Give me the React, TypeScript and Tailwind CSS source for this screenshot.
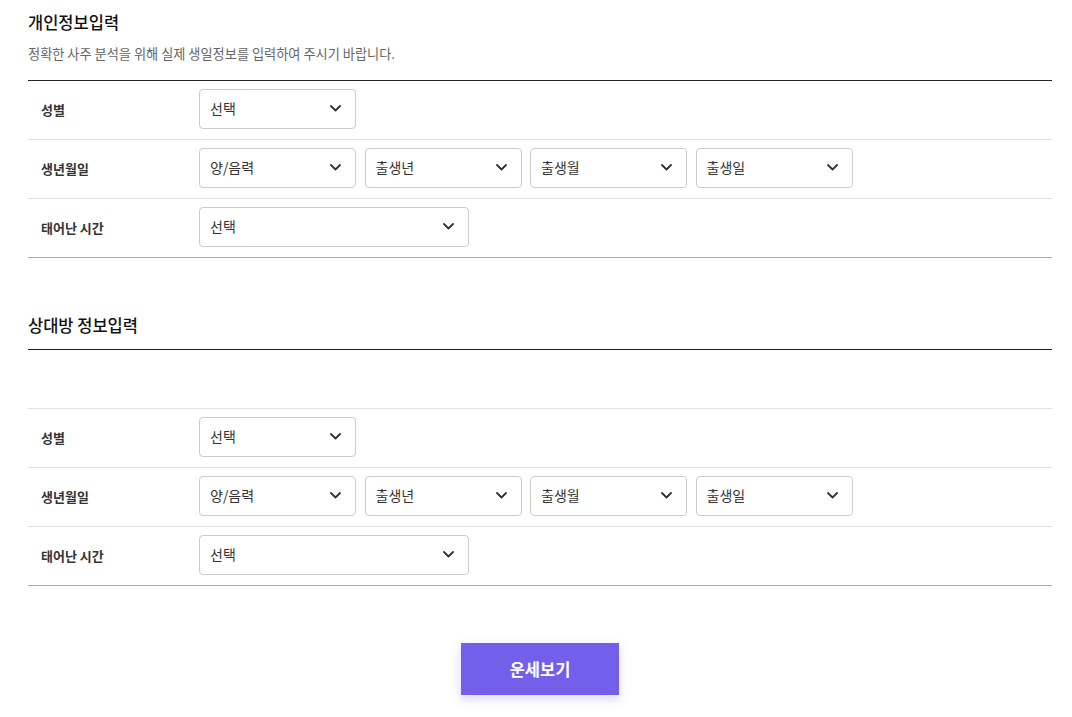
import React from "react";

const font = { fontFamily: '"Noto Sans CJK KR", "Noto Sans", sans-serif' };

function Chevron() {
  return (
    <svg width="11" height="7" viewBox="0 0 11 7" fill="none">
      <path d="M1 1L5.5 5.5L10 1" stroke="#333" strokeWidth="1.8" strokeLinecap="round" strokeLinejoin="round" />
    </svg>
  );
}

function Select({ label, wide }: { label: string; wide?: boolean }) {
  return (
    <div
      className={`flex h-[40px] items-center justify-between rounded-[4px] border border-[#cccccc] bg-white pl-[10px] pr-[14px] text-[14px] text-[#333] ${
        wide ? "w-[270px]" : "w-[157px]"
      }`}
    >
      <span>{label}</span>
      <Chevron />
    </div>
  );
}

function Row({ label, children, last }: { label: string; children: React.ReactNode; last?: boolean }) {
  return (
    <div className={`flex h-[59px] items-center border-b pb-[3px] ${last ? "border-[#aaaaaa]" : "border-[#e2e2e2]"}`}>
      <div className="w-[171px] pl-[13px] pt-[3px] text-[13px] font-bold text-[#333]">{label}</div>
      <div className="flex gap-[8.5px]">{children}</div>
    </div>
  );
}

function Rows() {
  return (
    <>
      <Row label="성별">
        <Select label="선택" />
      </Row>
      <Row label="생년월일">
        <Select label="양/음력" />
        <Select label="출생년" />
        <Select label="출생월" />
        <Select label="출생일" />
      </Row>
      <Row label="태어난 시간" last>
        <Select label="선택" wide />
      </Row>
    </>
  );
}

export default function App() {
  return (
    <div className="h-[717px] overflow-hidden bg-white pl-[28px] pr-[20px]" style={font}>
      <div className="pt-[10px] text-[16.5px] font-medium leading-[24px] text-[#111]">개인정보입력</div>
      <div className="mt-[11px] text-[13.2px] leading-[18px] text-[#666]">
        정확한 사주 분석을 위해 실제 생일정보를 입력하여 주시기 바랍니다.
      </div>
      <div className="mt-[17px] border-t border-[#222]">
        <Rows />
      </div>

      <div className="mt-[55px] text-[16.5px] font-medium leading-[24px] text-[#111]">상대방 정보입력</div>
      <div className="mt-[12px] border-t border-[#222]">
        <div className="h-[59px] border-b border-[#e2e2e2]" />
        <Rows />
      </div>

      <div className="mt-[57px] flex justify-center">
        <button className="h-[52px] w-[158px] bg-[#735fea] text-[16.5px] font-bold text-white shadow-[0_4px_10px_rgba(115,95,234,0.25)]">
          운세보기
        </button>
      </div>
    </div>
  );
}
